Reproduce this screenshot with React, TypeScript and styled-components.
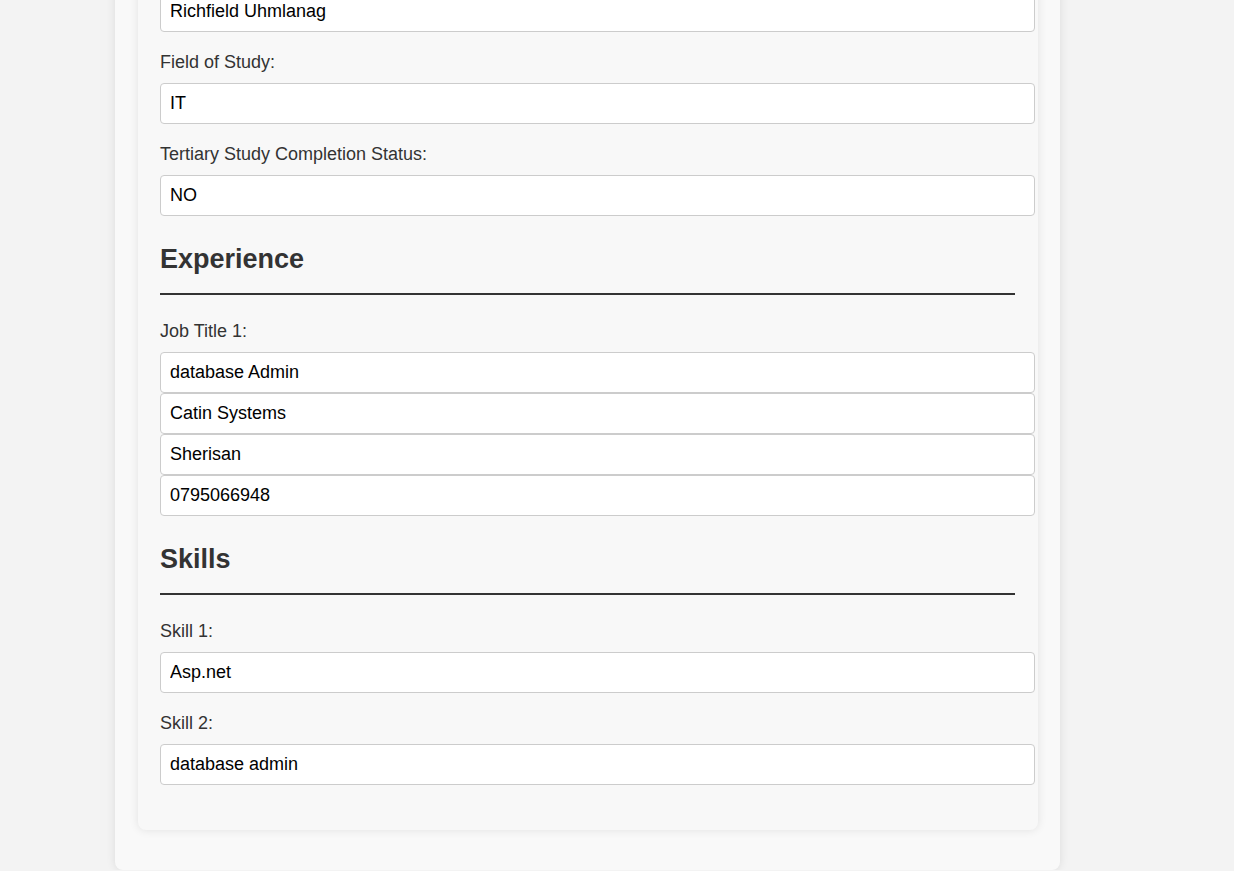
import React from "react";
import styled, { createGlobalStyle } from "styled-components";

const GlobalStyle = createGlobalStyle`
  html, body {
    margin: 0;
    padding: 0;
    background: #f3f3f3;
    font-family: "Liberation Sans", Arial, sans-serif;
    font-size: 18px;
  }
  * { box-sizing: border-box; }
`;

const Page = styled.div`
  width: 945px;
  margin: -159px 0 0 115px;
  padding: 22px 22px 40px 23px;
  background: #f9f9f9;
  border-radius: 8px;
  box-shadow: 0 0 10px rgba(0, 0, 0, 0.1);
`;

const Card = styled.section`
  width: 900px;
  padding: 20px 23px 25px 22px;
  background: #f8f8f8;
  border-radius: 8px;
  box-shadow: 0 0 10px rgba(0, 0, 0, 0.1);
`;

const SectionTitle = styled.h2`
  margin: 28px 0 26px;
  padding-bottom: 18px;
  font-size: 27px;
  line-height: 31px;
  font-weight: 700;
  color: #333;
  border-bottom: 2px solid #333;
  &:first-child { margin-top: 0; }
`;

const Group = styled.div`
  margin-bottom: 20px;
`;

const Label = styled.label`
  display: block;
  margin-bottom: 11px;
  font-size: 18px;
  line-height: 20px;
  color: #333;
`;

const Input = styled.input`
  display: block;
  width: calc(100% + 20px);
  height: 41px;
  margin: 0;
  padding: 0 9px;
  font-family: "Liberation Sans", Arial, sans-serif;
  font-size: 18px;
  color: #000;
  background: #fff;
  border: 1px solid #ccc;
  border-radius: 4px;
  outline: none;
`;

type Field = { label: string; values: string[] };

const sections: { title: string; fields: Field[] }[] = [
  {
    title: "Education",
    fields: [
      { label: "Institution Name:", values: ["Richfield Uhmlanag"] },
      { label: "Field of Study:", values: ["IT"] },
      { label: "Tertiary Study Completion Status:", values: ["NO"] },
    ],
  },
  {
    title: "Experience",
    fields: [
      {
        label: "Job Title 1:",
        values: ["database Admin", "Catin Systems", "Sherisan", "0795066948"],
      },
    ],
  },
  {
    title: "Skills",
    fields: [
      { label: "Skill 1:", values: ["Asp.net"] },
      { label: "Skill 2:", values: ["database admin"] },
    ],
  },
];

export default function App() {
  return (
    <>
      <GlobalStyle />
      <Page>
        <Card>
          {sections.map((s) => (
            <React.Fragment key={s.title}>
              <SectionTitle>{s.title}</SectionTitle>
              {s.fields.map((f) => (
                <Group key={f.label}>
                  <Label>{f.label}</Label>
                  {f.values.map((v, i) => (
                    <Input key={i} type="text" defaultValue={v} readOnly />
                  ))}
                </Group>
              ))}
            </React.Fragment>
          ))}
        </Card>
      </Page>
    </>
  );
}
